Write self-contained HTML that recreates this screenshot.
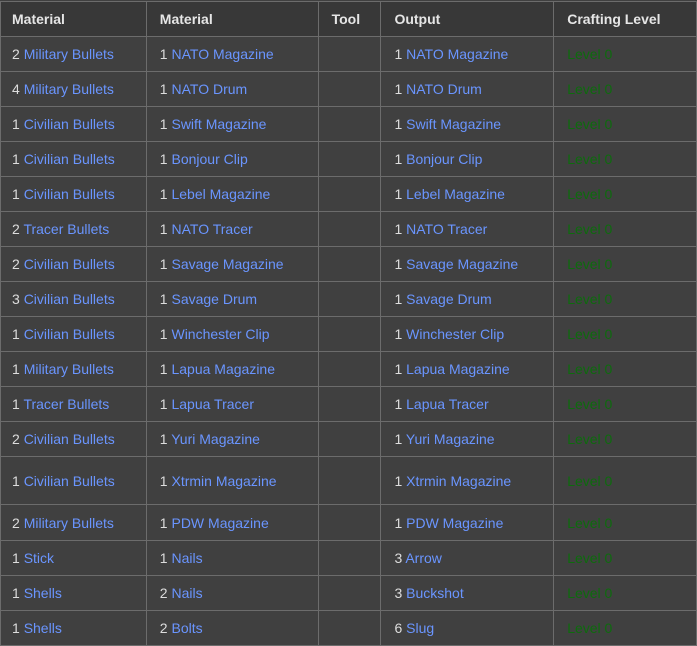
<!DOCTYPE html>
<html><head><style>
body{margin:0;background:#404040;width:697px;height:646px;overflow:hidden}
table{border-collapse:collapse;position:absolute;left:0;top:1px;table-layout:fixed;font-family:"Liberation Sans",Arial,sans-serif;font-size:14px;color:#ddd}
td,th{border:1px solid #6c6c6c;padding:0 0 0 13px;text-align:left;white-space:nowrap}
td:first-child,th:first-child{padding-left:11px}
th{background:#383838;height:34px;font-weight:bold;color:#e6e6e6}
td{background:#404040;height:34px}
a{color:#6a95ff;text-decoration:none}
.g{color:#0d6b0d}
tr.t td{height:47px}
tr.p td{height:35px}
</style></head><body>
<table>
<colgroup><col style="width:146px"><col style="width:172px"><col style="width:63px"><col style="width:173px"><col style="width:143px"></colgroup>
<tr><th>Material</th><th>Material</th><th>Tool</th><th>Output</th><th>Crafting Level</th></tr>
<tr><td>2 <a>Military Bullets</a></td><td>1 <a>NATO Magazine</a></td><td></td><td>1 <a>NATO Magazine</a></td><td class="g">Level 0</td></tr>
<tr><td>4 <a>Military Bullets</a></td><td>1 <a>NATO Drum</a></td><td></td><td>1 <a>NATO Drum</a></td><td class="g">Level 0</td></tr>
<tr><td>1 <a>Civilian Bullets</a></td><td>1 <a>Swift Magazine</a></td><td></td><td>1 <a>Swift Magazine</a></td><td class="g">Level 0</td></tr>
<tr><td>1 <a>Civilian Bullets</a></td><td>1 <a>Bonjour Clip</a></td><td></td><td>1 <a>Bonjour Clip</a></td><td class="g">Level 0</td></tr>
<tr><td>1 <a>Civilian Bullets</a></td><td>1 <a>Lebel Magazine</a></td><td></td><td>1 <a>Lebel Magazine</a></td><td class="g">Level 0</td></tr>
<tr><td>2 <a>Tracer Bullets</a></td><td>1 <a>NATO Tracer</a></td><td></td><td>1 <a>NATO Tracer</a></td><td class="g">Level 0</td></tr>
<tr><td>2 <a>Civilian Bullets</a></td><td>1 <a>Savage Magazine</a></td><td></td><td>1 <a>Savage Magazine</a></td><td class="g">Level 0</td></tr>
<tr><td>3 <a>Civilian Bullets</a></td><td>1 <a>Savage Drum</a></td><td></td><td>1 <a>Savage Drum</a></td><td class="g">Level 0</td></tr>
<tr><td>1 <a>Civilian Bullets</a></td><td>1 <a>Winchester Clip</a></td><td></td><td>1 <a>Winchester Clip</a></td><td class="g">Level 0</td></tr>
<tr><td>1 <a>Military Bullets</a></td><td>1 <a>Lapua Magazine</a></td><td></td><td>1 <a>Lapua Magazine</a></td><td class="g">Level 0</td></tr>
<tr><td>1 <a>Tracer Bullets</a></td><td>1 <a>Lapua Tracer</a></td><td></td><td>1 <a>Lapua Tracer</a></td><td class="g">Level 0</td></tr>
<tr><td>2 <a>Civilian Bullets</a></td><td>1 <a>Yuri Magazine</a></td><td></td><td>1 <a>Yuri Magazine</a></td><td class="g">Level 0</td></tr>
<tr class="t"><td>1 <a>Civilian Bullets</a></td><td>1 <a>Xtrmin Magazine</a></td><td></td><td>1 <a>Xtrmin Magazine</a></td><td class="g">Level 0</td></tr>
<tr class="p"><td>2 <a>Military Bullets</a></td><td>1 <a>PDW Magazine</a></td><td></td><td>1 <a>PDW Magazine</a></td><td class="g">Level 0</td></tr>
<tr><td>1 <a>Stick</a></td><td>1 <a>Nails</a></td><td></td><td>3 <a>Arrow</a></td><td class="g">Level 0</td></tr>
<tr><td>1 <a>Shells</a></td><td>2 <a>Nails</a></td><td></td><td>3 <a>Buckshot</a></td><td class="g">Level 0</td></tr>
<tr><td>1 <a>Shells</a></td><td>2 <a>Bolts</a></td><td></td><td>6 <a>Slug</a></td><td class="g">Level 0</td></tr>
</table>
</body></html>
